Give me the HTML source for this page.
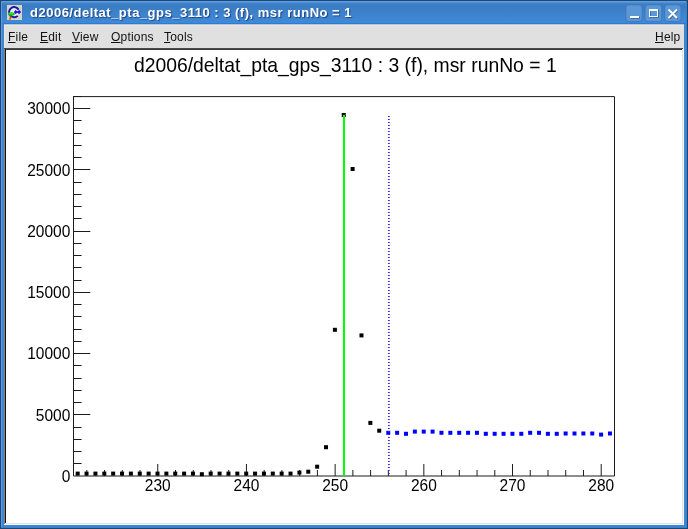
<!DOCTYPE html>
<html><head><meta charset="utf-8"><style>
html,body{margin:0;padding:0;width:688px;height:529px;overflow:hidden;background:#1f4670;}
.abs{position:absolute;}
#title{left:30px;top:5px;font:bold 13px/16px "Liberation Sans",sans-serif;letter-spacing:0.5px;color:#fff;text-shadow:1px 1px 1px rgba(0,0,50,0.5);white-space:nowrap;will-change:transform;}
.mi{position:absolute;top:29px;font:12px/16px "Liberation Sans",sans-serif;letter-spacing:0.2px;color:#111;white-space:nowrap;will-change:transform;}
.mi u{text-decoration:underline;text-underline-offset:1px;text-decoration-thickness:1px;}
svg text{font-family:"Liberation Sans",sans-serif;}
</style></head><body>
<svg class="abs" style="left:0;top:0" width="688" height="529">
<defs>
<linearGradient id="tg" x1="0" y1="0" x2="0" y2="1">
<stop offset="0" stop-color="#3a7bc2"/><stop offset="0.15" stop-color="#3a7bc2"/><stop offset="1" stop-color="#3f8ad8"/>
</linearGradient>
</defs>
<rect x="0" y="0" width="688" height="529" fill="#1f4670"/>
<rect x="1" y="1" width="686" height="527" fill="#3d86d4"/>
<rect x="1" y="1" width="686" height="1" fill="#5c9fe4"/>
<rect x="1" y="2" width="686" height="21" fill="url(#tg)"/>
<rect x="2" y="2" width="684" height="1" fill="#4b8ed6"/>
<rect x="2" y="3" width="684" height="1" fill="#4284cb"/>
<rect x="2" y="4" width="684" height="1" fill="#3d7ec4"/>
<rect x="1" y="23" width="686" height="1" fill="#2f7ad0"/>
<rect x="1" y="1" width="1" height="527" fill="#5c9ce0"/>
<rect x="686" y="1" width="1" height="527" fill="#3a7fca"/>
<rect x="1" y="527" width="686" height="1" fill="#3a7fca"/>
<g fill="#5b96d6" stroke="#3f78ba" stroke-width="1">
<rect x="625.8" y="4.8" width="16.4" height="16.8" rx="3"/>
<rect x="645" y="4.8" width="16.8" height="16.8" rx="3"/>
<rect x="664.6" y="4.8" width="16.4" height="16.8" rx="3"/>
</g>
<g transform="translate(0.8 0.8)" opacity="0.35">
<rect x="630" y="16" width="9" height="2" fill="#002"/>
<rect x="649.5" y="9.5" width="8" height="7" fill="none" stroke="#002" stroke-width="1"/>
<path d="M668.5 9.5L677 18M677 9.5L668.5 18" stroke="#002" stroke-width="1.8"/>
</g>
<rect x="630" y="16" width="9" height="2" fill="#fff"/>
<rect x="649.5" y="9.5" width="8" height="7" fill="none" stroke="#fff" stroke-width="1"/>
<rect x="649" y="9" width="9" height="2" fill="#fff"/>
<path d="M668.5 9.5L677 18M677 9.5L668.5 18" stroke="#fff" stroke-width="1.8"/>
<rect x="7" y="5" width="15" height="15" fill="#d8d4cc"/>
<circle cx="14.2" cy="12.2" r="4.4" fill="#ebebf2"/>
<path d="M18.62 9.65 A5.1 5.1 0 1 0 17.74 15.87" fill="none" stroke="#1a1a9a" stroke-width="2"/>
<path d="M13.9 12.1 L15.6 9.9 L17.2 11.4 L19.2 10.1 L21.2 12.1 L19.2 14.1 L17.2 12.8 L15.6 14.3Z" fill="#1414e0"/>
<linearGradient id="trk" x1="0" y1="0" x2="0" y2="1"><stop offset="0" stop-color="#b02000"/><stop offset="1" stop-color="#c89020"/></linearGradient>
<path d="M10.2 15.2 L11.8 15.2 L10.6 20.2 L8.9 20.2 Z" fill="url(#trk)"/>
<ellipse cx="11.3" cy="14" rx="3.5" ry="1.7" fill="#14c014"/>
<ellipse cx="11" cy="13.4" rx="2.2" ry="0.8" fill="#40e040"/>
<rect x="4" y="24" width="680" height="501" fill="#e0e0e0"/>
<rect x="4" y="24" width="680" height="1" fill="#b6c6d8"/>
<rect x="4" y="25" width="680" height="1" fill="#e7e6e3"/>
<rect x="4" y="25" width="1" height="23" fill="#ece9e4"/>
<rect x="4" y="48" width="679" height="1" fill="#4a4a4a"/>
<rect x="5" y="49" width="677" height="1" fill="#3a3a3a"/>
<rect x="4" y="49" width="1" height="475" fill="#8a847c"/>
<rect x="5" y="49" width="1" height="474" fill="#111"/>
<rect x="682" y="49" width="1" height="475" fill="#e2e2e2"/>
<rect x="683" y="49" width="1" height="476" fill="#f6f6f6"/>
<rect x="5" y="523" width="678" height="1" fill="#e2e2e2"/>
<rect x="4" y="524" width="680" height="1" fill="#f6f6f6"/>
<rect x="6" y="50" width="676" height="473" fill="#fff"/>
<g stroke="#1c1c1c" stroke-width="1" fill="none">
<path d="M73.5 96.6H614.5V476H73.5Z"/>
<path d="M73 463.50h8.6 M73 451.50h8.6 M73 439.50h8.6 M73 427.50h8.6 M73 414.50h17.3 M73 402.50h8.6 M73 390.50h8.6 M73 378.50h8.6 M73 365.50h8.6 M73 353.50h17.3 M73 341.50h8.6 M73 329.50h8.6 M73 316.50h8.6 M73 304.50h8.6 M73 292.50h17.3 M73 280.50h8.6 M73 267.50h8.6 M73 255.50h8.6 M73 243.50h8.6 M73 231.50h17.3 M73 218.50h8.6 M73 206.50h8.6 M73 194.50h8.6 M73 182.50h8.6 M73 169.50h17.3 M73 157.50h8.6 M73 145.50h8.6 M73 133.50h8.6 M73 120.50h8.6 M73 108.50h17.3 M73 96.50h8.6"/>
<path d="M86.80 476v-6 M104.54 476v-6 M122.28 476v-6 M140.02 476v-6 M157.76 476v-12 M175.49 476v-6 M193.23 476v-6 M210.97 476v-6 M228.71 476v-6 M246.45 476v-12 M264.18 476v-6 M281.92 476v-6 M299.66 476v-6 M317.40 476v-6 M335.14 476v-12 M352.87 476v-6 M370.61 476v-6 M388.35 476v-6 M406.09 476v-6 M423.83 476v-12 M441.56 476v-6 M459.30 476v-6 M477.04 476v-6 M494.78 476v-6 M512.52 476v-12 M530.25 476v-6 M547.99 476v-6 M565.73 476v-6 M583.47 476v-6 M601.21 476v-12"/>
</g>
<g fill="#000"><rect x="75.68" y="471.60" width="4" height="4"/><rect x="84.55" y="471.60" width="4" height="4"/><rect x="93.42" y="471.60" width="4" height="4"/><rect x="102.29" y="471.60" width="4" height="4"/><rect x="111.16" y="471.60" width="4" height="4"/><rect x="120.03" y="471.60" width="4" height="4"/><rect x="128.90" y="471.60" width="4" height="4"/><rect x="137.77" y="471.60" width="4" height="4"/><rect x="146.64" y="471.60" width="4" height="4"/><rect x="155.51" y="471.60" width="4" height="4"/><rect x="164.37" y="471.60" width="4" height="4"/><rect x="173.24" y="471.60" width="4" height="4"/><rect x="182.11" y="471.60" width="4" height="4"/><rect x="190.98" y="471.60" width="4" height="4"/><rect x="199.85" y="472.20" width="4" height="4"/><rect x="208.72" y="471.60" width="4" height="4"/><rect x="217.59" y="471.60" width="4" height="4"/><rect x="226.46" y="471.60" width="4" height="4"/><rect x="235.33" y="471.60" width="4" height="4"/><rect x="244.20" y="471.60" width="4" height="4"/><rect x="253.06" y="471.60" width="4" height="4"/><rect x="261.93" y="471.60" width="4" height="4"/><rect x="270.80" y="471.60" width="4" height="4"/><rect x="279.67" y="471.60" width="4" height="4"/><rect x="288.54" y="471.60" width="4" height="4"/><rect x="297.41" y="470.60" width="4" height="4"/><rect x="306.28" y="469.70" width="4" height="4"/><rect x="315.15" y="464.70" width="4" height="4"/><rect x="324.02" y="445.20" width="4" height="4"/><rect x="332.89" y="327.80" width="4" height="4"/><rect x="341.75" y="113.00" width="4" height="4"/><rect x="350.62" y="167.00" width="4" height="4"/><rect x="359.49" y="333.40" width="4" height="4"/><rect x="368.36" y="420.90" width="4" height="4"/><rect x="377.23" y="428.70" width="4" height="4"/></g>
<g fill="#0000ff"><rect x="386.25" y="430.80" width="4" height="4"/><rect x="395.12" y="430.80" width="4" height="4"/><rect x="403.99" y="431.80" width="4" height="4"/><rect x="412.86" y="429.60" width="4" height="4"/><rect x="421.73" y="429.60" width="4" height="4"/><rect x="430.59" y="429.60" width="4" height="4"/><rect x="439.46" y="430.80" width="4" height="4"/><rect x="448.33" y="430.80" width="4" height="4"/><rect x="457.20" y="430.80" width="4" height="4"/><rect x="466.07" y="430.80" width="4" height="4"/><rect x="474.94" y="430.80" width="4" height="4"/><rect x="483.81" y="431.80" width="4" height="4"/><rect x="492.68" y="431.80" width="4" height="4"/><rect x="501.55" y="431.80" width="4" height="4"/><rect x="510.42" y="431.80" width="4" height="4"/><rect x="519.28" y="431.80" width="4" height="4"/><rect x="528.15" y="430.80" width="4" height="4"/><rect x="537.02" y="430.80" width="4" height="4"/><rect x="545.89" y="431.80" width="4" height="4"/><rect x="554.76" y="431.80" width="4" height="4"/><rect x="563.63" y="431.50" width="4" height="4"/><rect x="572.50" y="431.50" width="4" height="4"/><rect x="581.37" y="431.50" width="4" height="4"/><rect x="590.24" y="431.50" width="4" height="4"/><rect x="599.11" y="432.60" width="4" height="4"/><rect x="607.97" y="431.50" width="4" height="4"/></g>
<path d="M344 115V476" stroke="#00ff00" stroke-width="2"/>
<path d="M388.85 116V476" stroke="#2626ff" stroke-width="1.8" stroke-dasharray="1 2"/>
</svg>
<svg class="abs" style="left:0;top:0;will-change:transform" width="688" height="529">
<g font-size="15.5" fill="#000"><text transform="translate(70.3 481.90) scale(1 1.08)" text-anchor="end">0</text><text transform="translate(70.3 420.65) scale(1 1.08)" text-anchor="end">5000</text><text transform="translate(70.3 359.40) scale(1 1.08)" text-anchor="end">10000</text><text transform="translate(70.3 298.15) scale(1 1.08)" text-anchor="end">15000</text><text transform="translate(70.3 236.90) scale(1 1.08)" text-anchor="end">20000</text><text transform="translate(70.3 175.65) scale(1 1.08)" text-anchor="end">25000</text><text transform="translate(70.3 114.40) scale(1 1.08)" text-anchor="end">30000</text><text transform="translate(157.76 491) scale(1 1.08)" text-anchor="middle">230</text><text transform="translate(246.45 491) scale(1 1.08)" text-anchor="middle">240</text><text transform="translate(335.14 491) scale(1 1.08)" text-anchor="middle">250</text><text transform="translate(423.83 491) scale(1 1.08)" text-anchor="middle">260</text><text transform="translate(512.52 491) scale(1 1.08)" text-anchor="middle">270</text><text transform="translate(601.21 491) scale(1 1.08)" text-anchor="middle">280</text></g>
<text x="133.9" y="72.4" font-size="19.35" fill="#000">d2006/deltat_pta_gps_3110 : 3 (f), msr runNo = 1</text>
</svg>
<div id="title" class="abs">d2006/deltat_pta_gps_3110 : 3 (f), msr runNo = 1</div>
<div class="mi" style="left:8px"><u>F</u>ile</div>
<div class="mi" style="left:40px"><u>E</u>dit</div>
<div class="mi" style="left:72px"><u>V</u>iew</div>
<div class="mi" style="left:111px"><u>O</u>ptions</div>
<div class="mi" style="left:164px"><u>T</u>ools</div>
<div class="mi" style="left:655px"><u>H</u>elp</div>
</body></html>
